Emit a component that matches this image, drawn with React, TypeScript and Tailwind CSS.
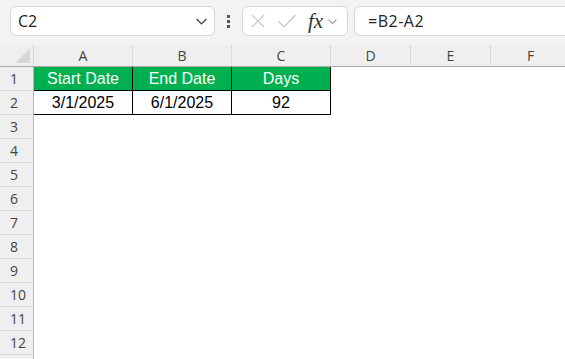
import React from "react";

const cols = [
  { name: "A", w: "w-[99px]" },
  { name: "B", w: "w-[99px]" },
  { name: "C", w: "w-[99px]" },
  { name: "D", w: "w-[80px]" },
  { name: "E", w: "w-[80px]" },
  { name: "F", w: "w-[80px]" },
];

const data: Record<number, string[]> = {
  1: ["Start Date", "End Date", "Days"],
  2: ["3/1/2025", "6/1/2025", "92"],
};

function Chevron({ className }: { className?: string }) {
  return (
    <svg viewBox="0 0 12 8" className={className} fill="none" stroke="currentColor" strokeWidth="1.3">
      <path d="M1.5 1.8 L6 6.2 L10.5 1.8" />
    </svg>
  );
}

export default function App() {
  const rows = Array.from({ length: 13 }, (_, i) => i + 1);

  return (
    <div className="w-[565px] h-[359px] overflow-hidden bg-white font-['Liberation_Sans',sans-serif]">
      {/* formula bar */}
      <div className="h-[45px] bg-[#f3f3f3] flex items-start pt-[6px] pl-[10px] gap-0">
        <div className="w-[205px] h-[30px] bg-white border border-[#d6d6d6] rounded-[6px] flex items-center pl-[7px] pr-[6px]">
          <span className="text-[16px] text-[#222] font-['Open_Sans',sans-serif] leading-none">C2</span>
          <Chevron className="ml-auto w-[13px] h-[9px] text-[#444]" />
        </div>
        <div className="w-[27px] h-[30px] flex flex-col items-center justify-center gap-[2px]">
          <span className="w-[3px] h-[3px] bg-[#555]" />
          <span className="w-[3px] h-[3px] bg-[#555]" />
          <span className="w-[3px] h-[3px] bg-[#555]" />
        </div>
        <div className="w-[106px] h-[30px] bg-white border border-[#d6d6d6] rounded-[6px] flex items-center pl-[7px]">
          <svg viewBox="0 0 16 16" className="w-[16px] h-[16px] text-[#c4c4c4]" fill="none" stroke="currentColor" strokeWidth="1.1">
            <path d="M2 2 L14 14 M14 2 L2 14" />
          </svg>
          <svg viewBox="0 0 20 16" className="ml-[11px] w-[20px] h-[16px] text-[#c4c4c4]" fill="none" stroke="currentColor" strokeWidth="1.1">
            <path d="M1.5 8.5 L7 14 L18.5 2" />
          </svg>
          <span className="ml-[11px] text-[21px] italic text-[#333] font-['Liberation_Serif',serif] leading-none">fx</span>
          <Chevron className="ml-[4px] w-[11px] h-[7px] text-[#999]" />
        </div>
        <div className="ml-[6px] flex-1 h-[30px] bg-white border border-r-0 border-[#d6d6d6] rounded-l-[6px] flex items-center pl-[13px]">
          <span className="text-[16px] tracking-[0.5px] text-[#222] font-['Open_Sans',sans-serif] leading-none">=B2-A2</span>
        </div>
      </div>

      {/* column header */}
      <div className="flex h-[22px] bg-[#efefef] border-b border-[#a9a9a9]">
        <div className="w-[34px] shrink-0 border-r border-[#d4d4d4] flex items-end justify-end pr-[3px] pb-[3px]">
          <div className="w-0 h-0 border-l-[15px] border-l-transparent border-b-[15px] border-b-[#d7d7d7]" />
        </div>
        {cols.map((c) => (
          <div
            key={c.name}
            className={`${c.w} shrink-0 border-r border-[#dadada] flex items-center justify-center text-[14px] text-[#444] font-['Open_Sans',sans-serif]`}
          >
            {c.name}
          </div>
        ))}
      </div>

      {/* rows */}
      {rows.map((r) => (
        <div key={r} className="flex h-[24px]">
          <div className="w-[34px] shrink-0 bg-[#efefef] border-r border-[#b8b8b8] border-b border-b-[#d7d7d7] flex items-center pl-[10px] text-[14px] text-[#444] font-['Open_Sans',sans-serif]">
            {r < 13 ? r : ""}
          </div>
          {cols.map((c, ci) => {
            const val = data[r]?.[ci];
            const isData = val !== undefined;
            const isHead = r === 1 && isData;
            return (
              <div
                key={c.name}
                className={`${c.w} shrink-0 border-r border-b flex items-center justify-center text-[16px] ${
                  isData ? "border-black" : "border-transparent"
                } ${isHead ? "bg-[#00b050] text-white" : "text-black"}`}
              >
                {val}
              </div>
            );
          })}
        </div>
      ))}
    </div>
  );
}
